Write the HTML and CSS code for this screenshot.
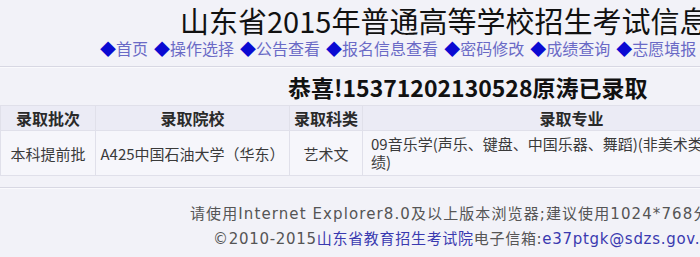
FILE: index.html
```html
<!DOCTYPE html>
<html lang="zh-CN">
<head>
<meta charset="utf-8">
<title>山东省2015年普通高等学校招生考试信息网</title>
<link rel="stylesheet" href="styles.css">
</head>
<body>
<div class="page">
  <h1 class="title">山东省2015年普通高等学校招生考试信息网</h1>
  <div class="nav">
    <a class="nav-item" href="#">首页</a>
    <a class="nav-item" href="#">操作选择</a>
    <a class="nav-item" href="#">公告查看</a>
    <a class="nav-item" href="#">报名信息查看</a>
    <a class="nav-item" href="#">密码修改</a>
    <a class="nav-item" href="#">成绩查询</a>
    <a class="nav-item" href="#">志愿填报</a>
  </div>
  <div class="rule"></div>
  <div class="congrats">恭喜!15371202130528原涛已录取</div>
  <table class="result">
    <colgroup>
      <col class="c1"><col class="c2"><col class="c3"><col class="c4">
    </colgroup>
    <tr class="head">
      <th>录取批次</th>
      <th>录取院校</th>
      <th>录取科类</th>
      <th>录取专业</th>
    </tr>
    <tr class="data">
      <td class="center">本科提前批</td>
      <td class="center">A425中国石油大学（华东）</td>
      <td class="center">艺术文</td>
      <td class="major-cell"><div class="major">09音乐学(声乐、键盘、中国乐器、舞蹈)(非美术类成绩)</div></td>
    </tr>
  </table>
  <div class="rule rule-bottom"></div>
  <div class="footer">
    <p class="f1">请使用Internet Explorer8.0及以上版本浏览器;建议使用1024*768分辨率</p>
    <p class="f2">©2010-2015<a href="#" class="flink">山东省教育招生考试院</a>电子信箱:<a href="#" class="flink">e37ptgk@sdzs.gov.cn</a></p>
  </div>
</div>
</body>
</html>
```
FILE: styles.css
```css
html, body {
  margin: 0;
  padding: 0;
  background: #f2f2f8;
  overflow: hidden;
}
.page {
  width: 960px;
  font-family: "Noto Sans CJK SC", "Noto Sans", sans-serif;
  color: #333;
}
.title {
  margin: 0;
  padding: 3px 0 0 180px;
  font-size: 29px;
  line-height: 34px;
  font-weight: normal;
  color: #111;
  white-space: nowrap;
}
.nav {
  display: flex;
  gap: 6px;
  margin-top: 1px;
  padding-left: 100px;
  height: 20px;
  font-size: 16px;
  line-height: 20px;
  white-space: nowrap;
}
.nav-item {
  color: #6a6ac6;
  text-decoration: none;
}
.nav-item::before {
  content: "◆";
  color: #0a0ad2;
}
.rule {
  margin-top: 8px;
  border-top: 1px solid #d8d8e3;
  border-bottom: 1px solid #fafafd;
}
.congrats {
  padding-left: 288px;
  margin-top: 4px;
  font-size: 23px;
  line-height: 30px;
  font-weight: bold;
  color: #111;
  white-space: nowrap;
}
.result {
  margin-top: 3px;
  width: 780px;
  border-collapse: collapse;
  table-layout: fixed;
  font-size: 15px;
}
.c1 { width: 95px; }
.c2 { width: 194px; }
.c3 { width: 73px; }
.c4 { width: 418px; }
.result th,
.result td {
  border: 1px solid #e0e0ea;
  padding: 0;
}
.head {
  height: 25px;
  background: #ebebf5;
}
.head th {
  font-size: 16px;
  font-weight: bold;
  color: #2a2a2a;
  line-height: 24px;
}
.data {
  height: 45px;
  background: #f6f6fb;
}
.center {
  text-align: center;
  white-space: nowrap;
  color: #3a3a3a;
}
.major-cell {
  padding: 0 0 0 8px !important;
  color: #3a3a3a;
}
.major {
  max-width: 360px;
  line-height: 18px;
}
.rule-bottom {
  margin-top: 11px;
}
.footer {
  font-family: "DejaVu Sans", "Noto Sans CJK SC", sans-serif;
  font-size: 15px;
  letter-spacing: 0.7px;
  line-height: 25px;
  color: #555;
  white-space: nowrap;
  padding-top: 13px;
}
.footer p {
  margin: 0;
}
.f1 {
  padding-left: 190px;
  letter-spacing: 1.1px;
}
.f2 {
  padding-left: 213px;
}
.flink {
  color: #3a3ab0;
  text-decoration: none;
}
```
